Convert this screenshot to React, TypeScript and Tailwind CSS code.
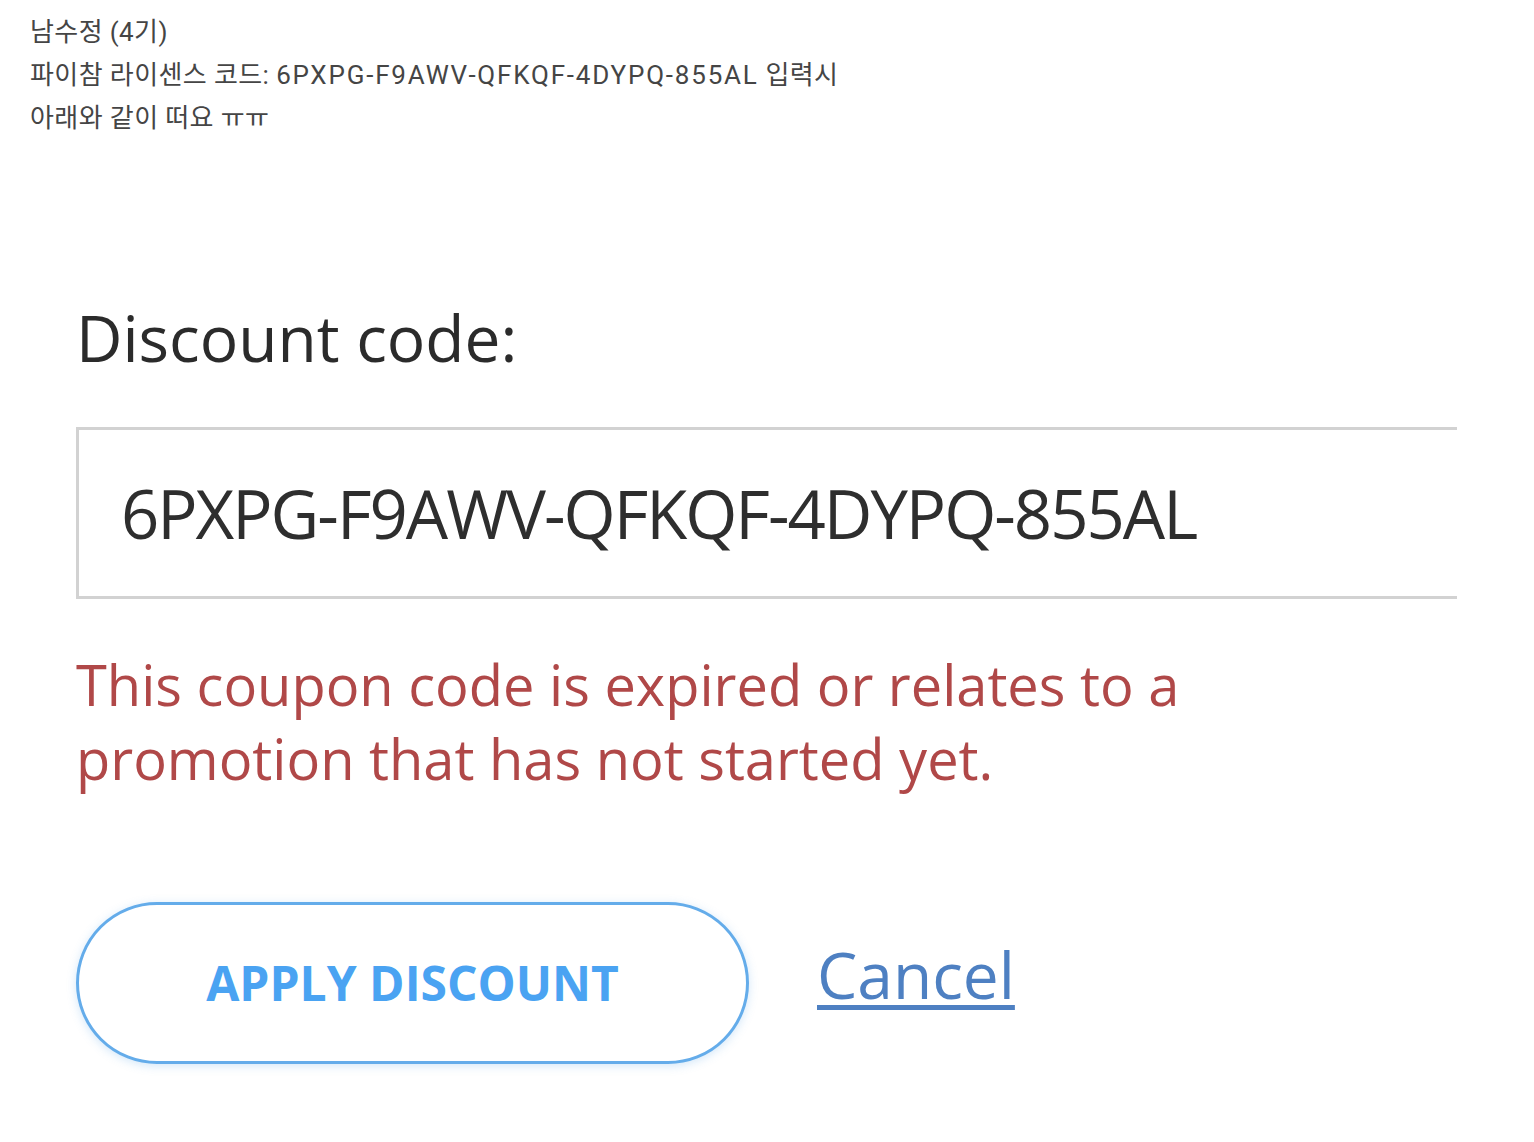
export default function App() {
  return (
    <div className="min-h-[1142px] w-[1534px] bg-white overflow-hidden">
      <div
        className="pl-[30px] pt-[11px] text-[26px] leading-[43px] tracking-[0.4px] text-[#454545]"
        style={{ fontFamily: 'Roboto, "Noto Sans CJK KR", sans-serif' }}
      >
        <p>남수정 (4기)</p>
        <p>
          파이참 라이센스 코드:{" "}
          <span className="tracking-[1.8px]">6PXPG-F9AWV-QFKQF-4DYPQ-855AL</span> 입력시
        </p>
        <p>아래와 같이 떠요 ㅠㅠ</p>
      </div>

      <div
        className="pl-[76px] pt-[158px]"
        style={{ fontFamily: '"Open Sans", "Noto Sans", sans-serif' }}
      >
        <label className="block text-[64px] leading-[80px] text-[#2b2b2b]">
          Discount code:
        </label>

        <div className="mt-[49px] flex h-[172px] w-[1381px] items-center border-[3px] border-r-0 border-[#d2d2d2] pl-[42px] text-[67px] tracking-[-2px] text-[#2e2e2e]">
          6PXPG-F9AWV-QFKQF-4DYPQ-855AL
        </div>

        <p className="mt-[48px] text-[56px] leading-[74px] text-[#b04848]">
          This coupon code is expired or relates to a
          <br />
          promotion that has not started yet.
        </p>

        <div className="mt-[107px] flex items-center gap-[68px]">
          <button className="flex h-[162px] w-[673px] items-center justify-center rounded-full border-[3px] border-[#64acea] bg-white text-[48px] font-bold text-[#4aa3f2] shadow-[0_2px_10px_rgba(80,160,230,0.25)]">
            APPLY DISCOUNT
          </button>
          <a className="pb-[16px] text-[64px] text-[#4e80c2] underline decoration-[5px] underline-offset-[6px]">
            Cancel
          </a>
        </div>
      </div>
    </div>
  );
}
